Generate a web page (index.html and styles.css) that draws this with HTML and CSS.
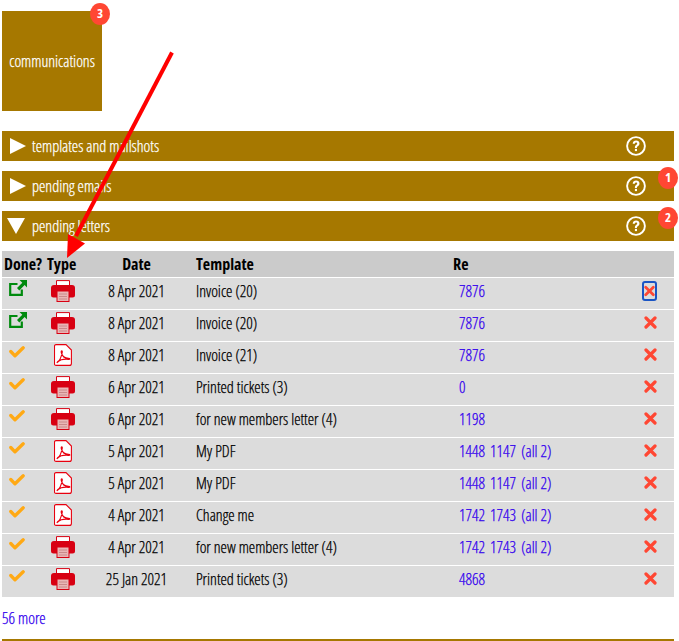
FILE: index.html
```html
<!DOCTYPE html>
<html lang="en">
<head>
<meta charset="utf-8">
<title>communications</title>
<link rel="stylesheet" href="styles.css">
</head>
<body>
<svg width="0" height="0" class="defs">
  <defs>
    <symbol id="printer" viewBox="0 0 24 22">
      <path d="M5.500 8V.6h13V8" fill="#fff" stroke="#d80012" stroke-width="1"/>
      <path d="M3 5h18a3 3 0 0 1 3 3v7a2.500 2.500 0 0 1-2.500 2.500h-19A2.500 2.500 0 0 1 0 15V8a3 3 0 0 1 3-3z" fill="#d80012"/>
      <rect x="6" y="11" width="12" height="10.500" fill="#e9b5b5" stroke="#d80012"/>
      <path d="M8 14h8M8 16.500h8M8 19h8" stroke="#c98a8a" stroke-width="1"/>
    </symbol>
    <symbol id="pdf" viewBox="0 0 18 22">
      <path d="M2 .6h10l5.400 5.400v13.400a2 2 0 0 1-2 2H2a1.500 1.500 0 0 1-1.500-1.500V2a1.500 1.500 0 0 1 1.500-1.400z" fill="#fff" stroke="#e8000f" stroke-width="1.100"/>
      <path d="M2.800 18.800C5.500 17.300 7.300 13 8.200 8.500c.4-2.200-1.300-2.200-.9 0 .7 3.100 3.100 5.800 7.200 5.800 1.800 0 1.800 1.300 0 1C11 15 6.300 15.500 3.600 17.800z" fill="none" stroke="#e8000f" stroke-width="1.200"/>
    </symbol>
    <symbol id="ext" viewBox="0 0 18 16">
      <path d="M8.500 4H1.200v10.800h11.600V9.500" fill="none" stroke="#008a0e" stroke-width="2.200"/>
      <path d="M10.500 0H18v7.500l-2.400-2.400-5.300 5.300-2.300-2.300 5.300-5.300z" fill="#008a0e"/>
    </symbol>
    <symbol id="check" viewBox="0 0 16 12">
      <path d="M1.800 5.500l4.200 4.300 8.200-8" fill="none" stroke="#ffa914" stroke-width="3.300" stroke-linecap="round" stroke-linejoin="round"/>
    </symbol>
    <symbol id="cross" viewBox="0 0 13 13">
      <path d="M2 2l9 9M11 2l-9 9" fill="none" stroke="#ff4733" stroke-width="3.200" stroke-linecap="round"/>
    </symbol>
    <symbol id="help" viewBox="0 0 20 20">
      <circle cx="10" cy="10" r="8.900" fill="none" stroke="#fff" stroke-width="1.900"/>
      <path d="M6.700 7.800C6.800 5.600 8.200 4.600 10.100 4.600c2 0 3.400 1.200 3.400 2.900 0 2.500-2.600 2.400-2.600 4.500H8.900c0-3.200 2.300-3 2.300-4.400 0-.7-.4-1.100-1.100-1.100-.9 0-1.200.6-1.300 1.300z" fill="#fff"/>
      <rect x="8.900" y="12.900" width="2.100" height="2.200" fill="#fff"/>
    </symbol>
  </defs>
</svg>

<main class="page">
  <div class="tile-row">
    <a class="tile">communications<span class="badge badge-tile">3</span></a>
  </div>

  <section class="bar">
    <span class="tri tri-right"></span>
    <span class="bar-title">templates and mailshots</span>
    <svg class="help"><use href="#help"/></svg>
  </section>
  <section class="bar">
    <span class="tri tri-right"></span>
    <span class="bar-title">pending emails</span>
    <svg class="help"><use href="#help"/></svg>
    <span class="badge badge-bar">1</span>
  </section>
  <section class="bar">
    <span class="tri tri-down"></span>
    <span class="bar-title">pending letters</span>
    <svg class="help"><use href="#help"/></svg>
    <span class="badge badge-bar">2</span>
  </section>

  <table class="letters">
    <thead>
      <tr>
        <th class="c-done">Done?</th>
        <th class="c-type">Type</th>
        <th class="c-date">Date</th>
        <th class="c-tpl">Template</th>
        <th class="c-re">Re</th>
        <th class="c-del"></th>
      </tr>
    </thead>
    <tbody>
      <tr>
        <td class="c-done"><svg class="i-ext"><use href="#ext"/></svg></td>
        <td class="c-type"><svg class="i-print"><use href="#printer"/></svg></td>
        <td class="c-date">8 Apr 2021</td><td class="c-tpl">Invoice (20)</td>
        <td class="c-re"><a>7876</a></td>
        <td class="c-del"><span class="focus"><svg class="i-cross"><use href="#cross"/></svg></span></td>
      </tr>
      <tr>
        <td class="c-done"><svg class="i-ext"><use href="#ext"/></svg></td>
        <td class="c-type"><svg class="i-print"><use href="#printer"/></svg></td>
        <td class="c-date">8 Apr 2021</td><td class="c-tpl">Invoice (20)</td>
        <td class="c-re"><a>7876</a></td>
        <td class="c-del"><svg class="i-cross"><use href="#cross"/></svg></td>
      </tr>
      <tr>
        <td class="c-done"><svg class="i-check"><use href="#check"/></svg></td>
        <td class="c-type"><svg class="i-pdf"><use href="#pdf"/></svg></td>
        <td class="c-date">8 Apr 2021</td><td class="c-tpl">Invoice (21)</td>
        <td class="c-re"><a>7876</a></td>
        <td class="c-del"><svg class="i-cross"><use href="#cross"/></svg></td>
      </tr>
      <tr>
        <td class="c-done"><svg class="i-check"><use href="#check"/></svg></td>
        <td class="c-type"><svg class="i-print"><use href="#printer"/></svg></td>
        <td class="c-date">6 Apr 2021</td><td class="c-tpl">Printed tickets (3)</td>
        <td class="c-re"><a>0</a></td>
        <td class="c-del"><svg class="i-cross"><use href="#cross"/></svg></td>
      </tr>
      <tr>
        <td class="c-done"><svg class="i-check"><use href="#check"/></svg></td>
        <td class="c-type"><svg class="i-print"><use href="#printer"/></svg></td>
        <td class="c-date">6 Apr 2021</td><td class="c-tpl">for new members letter (4)</td>
        <td class="c-re"><a>1198</a></td>
        <td class="c-del"><svg class="i-cross"><use href="#cross"/></svg></td>
      </tr>
      <tr>
        <td class="c-done"><svg class="i-check"><use href="#check"/></svg></td>
        <td class="c-type"><svg class="i-pdf"><use href="#pdf"/></svg></td>
        <td class="c-date">5 Apr 2021</td><td class="c-tpl">My PDF</td>
        <td class="c-re"><a>1448</a> <a>1147</a> <a>(all 2)</a></td>
        <td class="c-del"><svg class="i-cross"><use href="#cross"/></svg></td>
      </tr>
      <tr>
        <td class="c-done"><svg class="i-check"><use href="#check"/></svg></td>
        <td class="c-type"><svg class="i-pdf"><use href="#pdf"/></svg></td>
        <td class="c-date">5 Apr 2021</td><td class="c-tpl">My PDF</td>
        <td class="c-re"><a>1448</a> <a>1147</a> <a>(all 2)</a></td>
        <td class="c-del"><svg class="i-cross"><use href="#cross"/></svg></td>
      </tr>
      <tr>
        <td class="c-done"><svg class="i-check"><use href="#check"/></svg></td>
        <td class="c-type"><svg class="i-pdf"><use href="#pdf"/></svg></td>
        <td class="c-date">4 Apr 2021</td><td class="c-tpl">Change me</td>
        <td class="c-re"><a>1742</a> <a>1743</a> <a>(all 2)</a></td>
        <td class="c-del"><svg class="i-cross"><use href="#cross"/></svg></td>
      </tr>
      <tr>
        <td class="c-done"><svg class="i-check"><use href="#check"/></svg></td>
        <td class="c-type"><svg class="i-print"><use href="#printer"/></svg></td>
        <td class="c-date">4 Apr 2021</td><td class="c-tpl">for new members letter (4)</td>
        <td class="c-re"><a>1742</a> <a>1743</a> <a>(all 2)</a></td>
        <td class="c-del"><svg class="i-cross"><use href="#cross"/></svg></td>
      </tr>
      <tr>
        <td class="c-done"><svg class="i-check"><use href="#check"/></svg></td>
        <td class="c-type"><svg class="i-print"><use href="#printer"/></svg></td>
        <td class="c-date">25 Jan 2021</td><td class="c-tpl">Printed tickets (3)</td>
        <td class="c-re"><a>4868</a></td>
        <td class="c-del"><svg class="i-cross"><use href="#cross"/></svg></td>
      </tr>
    </tbody>
  </table>

  <p class="more"><a>56 more</a></p>
  <hr class="rule">
</main>

<svg class="arrow" width="679" height="300" viewBox="0 0 679 300">
  <path d="M172 52.500L76 236" stroke="#ff0000" stroke-width="4" fill="none"/>
  <path d="M67 258L85 243.500L68 234z" fill="#ff0000"/>
</svg>
</body>
</html>
```

FILE: styles.css
```css
* { box-sizing: border-box; }

html, body { margin: 0; padding: 0; background: #fff; }

body {
  position: relative;
  height: 641px;
  overflow: hidden;
  font-family: "Open Sans", "Liberation Sans", sans-serif;
  font-stretch: 75%;
  font-weight: 300;
  font-size: 16px;
  color: #000;
  -webkit-text-stroke: 0.25px currentColor;
}

.defs { position: absolute; }

.page { padding: 11px 5px 0 2px; }

.tile-row { margin-bottom: 20px; }

.tile {
  position: relative;
  display: flex;
  align-items: center;
  justify-content: center;
  width: 100px;
  height: 100px;
  background: #a67800;
  color: #fff;
}

.badge {
  position: absolute;
  width: 20px;
  height: 22px;
  border-radius: 50%;
  background: #ff4733;
  color: #fff;
  font-size: 13px;
  font-weight: 700;
  line-height: 21px;
  text-align: center;
  -webkit-text-stroke: 0;
}

.badge-tile { top: -8px; right: -8px; }
.badge-bar { top: -4px; right: -4px; }

.bar {
  position: relative;
  display: flex;
  align-items: center;
  height: 30px;
  margin-bottom: 10px;
  padding-left: 8px;
  background: #a67800;
  color: #fff;
}

.tri { display: block; width: 0; height: 0; margin-right: 6px; }

.tri-right {
  border-top: 8.500px solid transparent;
  border-bottom: 8.500px solid transparent;
  border-left: 16px solid #fff;
}

.tri-down {
  border-left: 9px solid transparent;
  border-right: 9px solid transparent;
  border-top: 16px solid #fff;
  margin-left: -3px;
  margin-right: 7px;
}

.bar-title { flex: 1; padding-bottom: 1px; }

.help { width: 20px; height: 20px; margin-right: 28px; }

.letters {
  width: 672px;
  table-layout: fixed;
  border-collapse: separate;
  border-spacing: 0;
}

.letters th, .letters td { padding: 0; overflow: visible; white-space: nowrap; }

.letters th {
  height: 27px;
  background: #cbcbcb;
  border-bottom: 1px solid #fff;
  font-weight: 700;
  color: #000;
  -webkit-text-stroke: 0;
}

.letters td {
  height: 32px;
  padding-top: 3px;
  background: #dcdcdc;
  border-bottom: 1px solid #fff;
  vertical-align: top;
  line-height: 20px;
}

.letters tbody tr:last-child td { height: 31px; border-bottom: 0; }

.c-done { width: 45px; text-align: left; padding-left: 2px !important; }
.c-type { width: 35px; text-align: left; }
.c-date { width: 109px; text-align: center; }
.c-tpl { width: 257px; text-align: left; padding-left: 5px !important; }
.c-re { width: 185px; text-align: left; padding-left: 5px !important; }
td.c-re { padding-left: 11px !important; }
.c-del { text-align: left; }

.letters svg { display: block; }

.letters td.c-done, .letters td.c-type { padding-top: 2px; }

td.c-done svg { margin-left: 5px; }
.i-ext { width: 18px; height: 16px; }
.i-check { width: 16px; height: 12px; margin-top: 2px; }

td.c-type svg { margin-left: 4px; }
.i-print { width: 24px; height: 22px; }
td.c-type .i-pdf { width: 18px; height: 22px; margin-left: 7px; }

.i-cross { width: 13px; height: 13px; }
td.c-del > svg { margin-top: 3px; margin-left: 11px; }

.focus {
  display: block;
  width: 15px;
  height: 20px;
  margin-left: 9px;
  border: 2px solid #1a55c4;
  border-radius: 3px;
  padding-top: 1px;
}

.focus .i-cross { width: 11px; height: 14px; }

a { color: #3300ee; }
.c-re a { margin-right: 2px; }

.more { margin: 12px 0 0; height: 18px; line-height: 18px; }

.rule {
  margin: 12px 0 0;
  border: 0;
  height: 2px;
  background: #a67800;
}

.arrow { position: absolute; left: 0; top: 0; pointer-events: none; }
```
